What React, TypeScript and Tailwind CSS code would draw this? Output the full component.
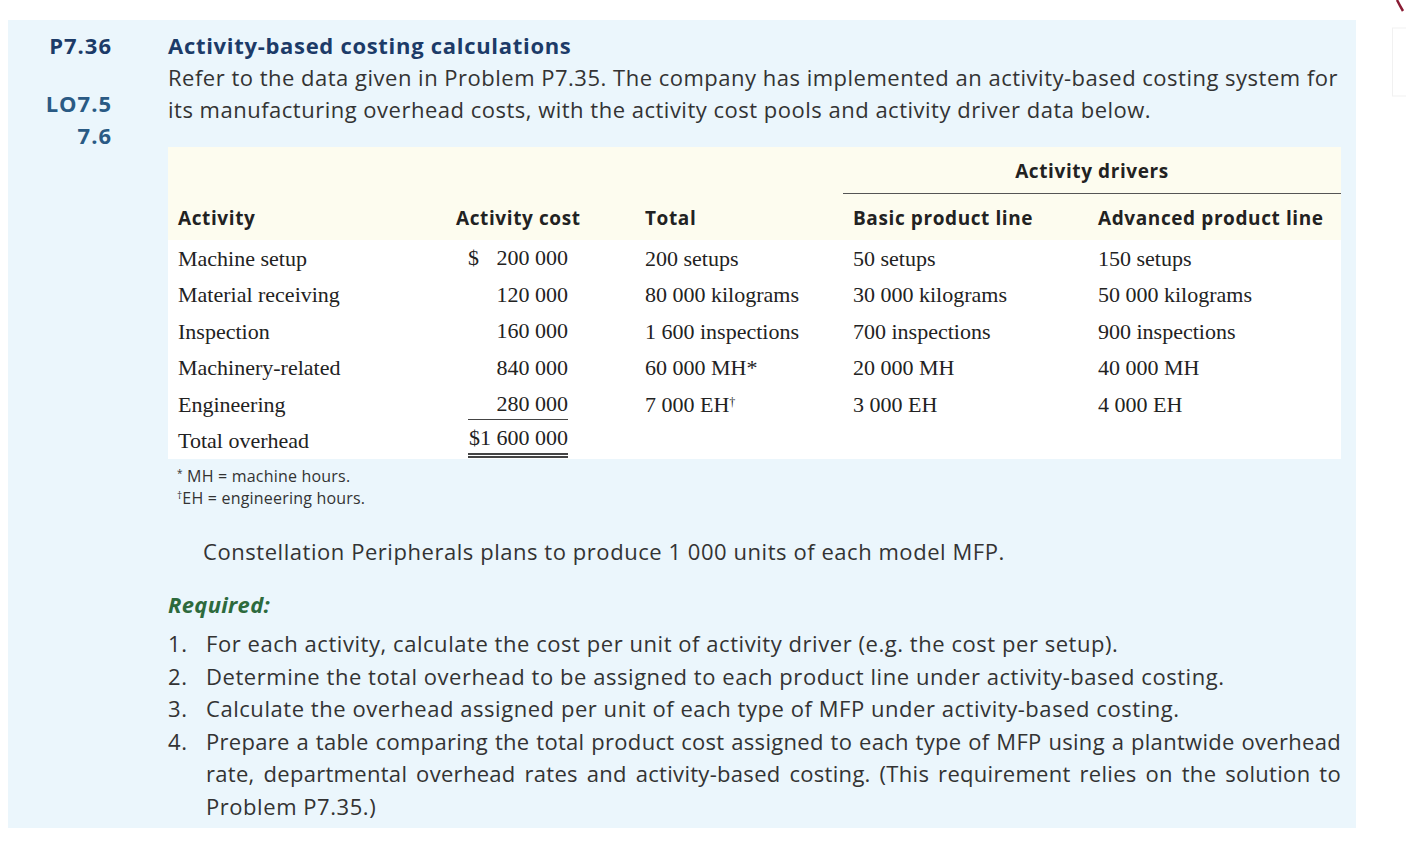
import type { ReactNode } from "react";

const sans = "font-['Open_Sans','Lato',sans-serif]";
const serif = "font-['Liberation_Serif','Times_New_Roman',serif]";

type Row = {
  activity: string;
  cost: ReactNode;
  total: ReactNode;
  basic: string;
  advanced: string;
};

const rows: Row[] = [
  {
    activity: "Machine setup",
    cost: (
      <span className="flex justify-between">
        <span>$</span>
        <span>200 000</span>
      </span>
    ),
    total: "200 setups",
    basic: "50 setups",
    advanced: "150 setups",
  },
  { activity: "Material receiving", cost: "120 000", total: "80 000 kilograms", basic: "30 000 kilograms", advanced: "50 000 kilograms" },
  { activity: "Inspection", cost: "160 000", total: "1 600 inspections", basic: "700 inspections", advanced: "900 inspections" },
  { activity: "Machinery-related", cost: "840 000", total: "60 000 MH*", basic: "20 000 MH", advanced: "40 000 MH" },
  {
    activity: "Engineering",
    cost: <span className="block border-b-[1.5px] border-[#444]">280 000</span>,
    total: (
      <>
        7 000 EH<sup className="text-[12px]">†</sup>
      </>
    ),
    basic: "3 000 EH",
    advanced: "4 000 EH",
  },
  {
    activity: "Total overhead",
    cost: <span className="block border-b-[5px] border-double border-[#444]">$1 600 000</span>,
    total: "",
    basic: "",
    advanced: "",
  },
];

function CostTable() {
  return (
    <div className="mt-[22px] w-[1173px]">
      {/* header band */}
      <div className="bg-[#fdfcef] pl-[10px]">
        <div className="flex h-[47px] items-end">
          <div className="ml-[665px] flex h-full w-[498px] flex-col justify-end border-b-[1.5px] border-[#555]">
            <div className={`${sans} pb-[8px] text-center text-[19px] font-bold tracking-[0.6px] text-[#222]`}>
              Activity drivers
            </div>
          </div>
        </div>
        <div className={`${sans} flex h-[46px] items-center pt-[3px] text-[19px] font-bold tracking-[0.6px] text-[#222]`}>
          <div className="w-[278px]">Activity</div>
          <div className="w-[189px]">Activity cost</div>
          <div className="w-[208px]">Total</div>
          <div className="w-[245px]">Basic product line</div>
          <div>Advanced product line</div>
        </div>
      </div>
      {/* body */}
      <div className={`${serif} bg-white pl-[10px] text-[22px] text-[#222]`}>
        {rows.map((r) => (
          <div key={r.activity} className="flex h-[36.5px] items-center">
            <div className="w-[278px]">{r.activity}</div>
            <div className="w-[189px]">
              <div className="ml-[12px] w-[100px] text-right leading-[30px]">{r.cost}</div>
            </div>
            <div className="w-[208px]">{r.total}</div>
            <div className="w-[245px]">{r.basic}</div>
            <div>{r.advanced}</div>
          </div>
        ))}
      </div>
    </div>
  );
}

const items: ReactNode[] = [
  "For each activity, calculate the cost per unit of activity driver (e.g. the cost per setup).",
  "Determine the total overhead to be assigned to each product line under activity-based costing.",
  "Calculate the overhead assigned per unit of each type of MFP under activity-based costing.",
  <>
    <span className="block text-justify tracking-[0.3px] [text-align-last:justify]">
      Prepare a table comparing the total product cost assigned to each type of MFP using a plantwide overhead
    </span>
    <span className="block text-justify tracking-[0.3px] [text-align-last:justify]">
      rate, departmental overhead rates and activity-based costing. (This requirement relies on the solution to
    </span>
    <span className="block">Problem P7.35.)</span>
  </>,
];

export default function App() {
  return (
    <div className="relative h-[844px] w-[1406px] overflow-hidden bg-white pt-[20px] pl-[8px]">
      {/* page-edge decoration at top right */}
      <svg className="absolute top-0 right-0" width="16" height="100" viewBox="0 0 16 100">
        <rect x="2.5" y="28" width="14" height="68" fill="none" stroke="#f1f1f1" />
        <path d="M7 0 Q10 6 13 11" stroke="#8a1c34" strokeWidth="2.5" fill="none" />
      </svg>

      <div className={`${sans} flex h-[808px] w-[1348px] bg-[#ebf6fc] pt-[9px]`}>
        {/* problem number column */}
        <div className="w-[104px] shrink-0 text-right text-[22px] font-bold leading-[32px] tracking-[1px]">
          <div className="text-[#1c3b68]">P7.36</div>
          <div className="mt-[26px] text-[#2a5a84]">LO7.5</div>
          <div className="text-[#2a5a84]">7.6</div>
        </div>

        {/* problem body */}
        <div className="ml-[56px] w-[1173px]">
          <h2 className="text-[22px] font-bold leading-[32px] tracking-[0.7px] text-[#1c3b68]">
            Activity-based costing calculations
          </h2>
          <p className="text-[22px] leading-[32px] tracking-[0.5px] text-[#333]">
            <span className="block whitespace-nowrap">
              Refer to the data given in Problem P7.35. The company has implemented an activity-based costing system for
            </span>
            <span className="block whitespace-nowrap">
              its manufacturing overhead costs, with the activity cost pools and activity driver data below.
            </span>
          </p>

          <CostTable />

          <div className="mt-[6px] pl-[9px] text-[16px] leading-[22px] tracking-[0.2px] text-[#333]">
            <div>
              <sup className="text-[10px]">*</sup> MH = machine hours.
            </div>
            <div>
              <sup className="text-[10px]">†</sup>EH = engineering hours.
            </div>
          </div>

          <p className="mt-[26px] pl-[35px] text-[22px] leading-[32px] tracking-[0.55px] text-[#333]">
            Constellation Peripherals plans to produce 1 000 units of each model MFP.
          </p>

          <div className="mt-[21px] text-[22px] font-bold italic leading-[32px] tracking-[0.3px] text-[#2d6a3c]">
            Required:
          </div>
          <ol className="mt-[7px] text-[22px] leading-[32.5px] tracking-[0.55px] text-[#333]">
            {items.map((it, i) => (
              <li key={i} className="flex">
                <span className="w-[38px] shrink-0">{i + 1}.</span>
                <span className="flex-1">{it}</span>
              </li>
            ))}
          </ol>
        </div>
      </div>
    </div>
  );
}
